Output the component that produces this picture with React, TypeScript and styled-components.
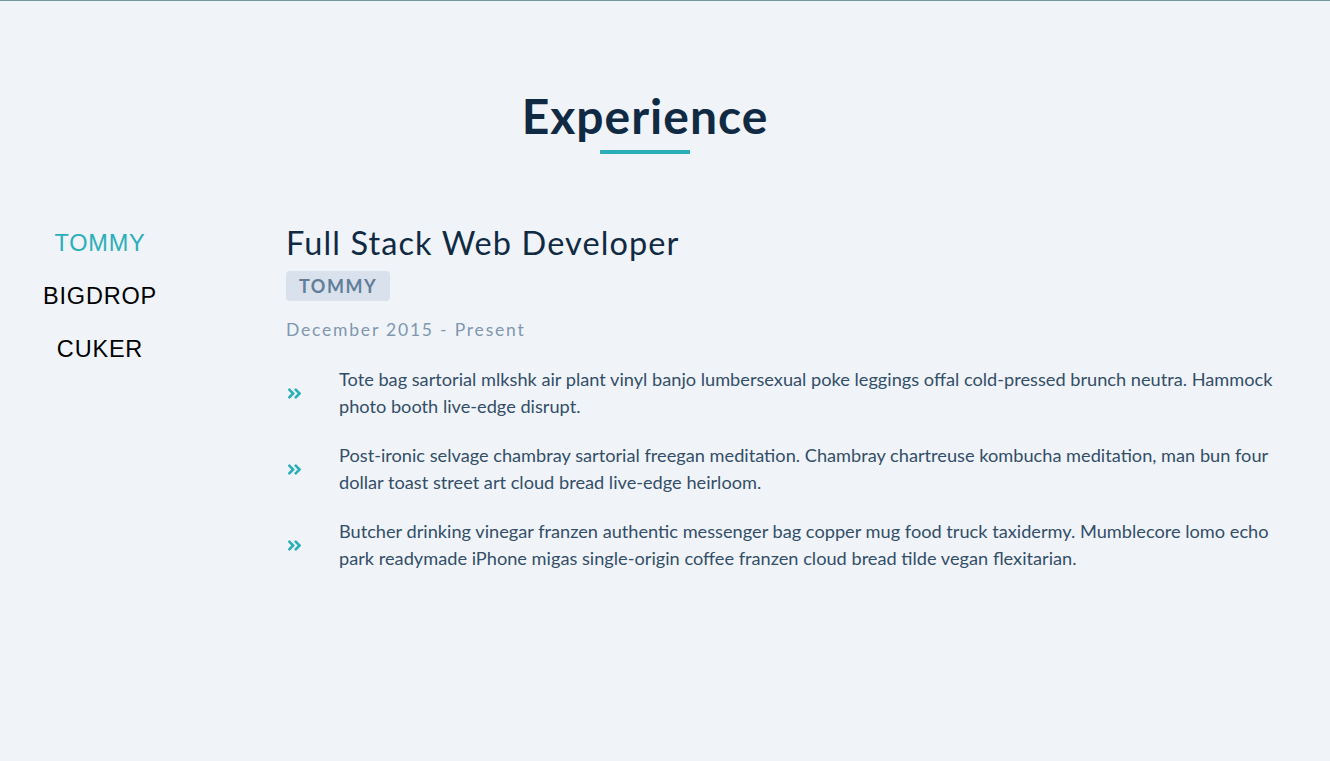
import React, { useState } from "react";
import styled, { createGlobalStyle } from "styled-components";
import { FaAngleDoubleRight } from "react-icons/fa";

const GlobalStyle = createGlobalStyle`
  html, body {
    margin: 0;
    padding: 0;
    background: #f0f4f8;
  }
  body {
    border-top: 1px solid #6f9a9f;
    font-family: Lato, "Open Sans", sans-serif;
  }
`;

const jobs = [
  {
    id: 1,
    company: "TOMMY",
    title: "Full Stack Web Developer",
    dates: "December 2015 - Present",
    duties: [
      "Tote bag sartorial mlkshk air plant vinyl banjo lumbersexual poke leggings offal cold-pressed brunch neutra. Hammock photo booth live-edge disrupt.",
      "Post-ironic selvage chambray sartorial freegan meditation. Chambray chartreuse kombucha meditation, man bun four dollar toast street art cloud bread live-edge heirloom.",
      "Butcher drinking vinegar franzen authentic messenger bag copper mug food truck taxidermy. Mumblecore lomo echo park readymade iPhone migas single-origin coffee franzen cloud bread tilde vegan flexitarian."
    ]
  },
  {
    id: 2,
    company: "BIGDROP",
    title: "Front-End Engineer",
    dates: "May 2015 - December 2015",
    duties: [
      "Hashtag drinking vinegar scenester mumblecore snackwave four dollar toast, lumbersexual XOXO. Cardigan church-key pabst, biodiesel vexillologist viral squid.",
      "Franzen af pitchfork, mumblecore try-hard kogi XOXO roof party la croix cardigan neutra retro tattooed copper mug."
    ]
  },
  {
    id: 3,
    company: "CUKER",
    title: "Engineering Intern",
    dates: "May 2014 - September 2015",
    duties: [
      "I'm baby woke mlkshk wolf bitters live-edge blue bottle, hammock freegan copper mug whatever cold-pressed.",
      "Cloud bread kinfolk heirloom tumeric, wolf echo park hexagon shoreditch."
    ]
  }
];

const Section = styled.section`
  width: 1290px;
  padding: 89px 0 120px;
`;

const Title = styled.div`
  text-align: center;
  margin-bottom: 69px;
`;

const Heading = styled.h2`
  margin: 0;
  font-size: 48px;
  font-weight: 700;
  letter-spacing: 1px;
  line-height: 52px;
  color: #102a43;
`;

const Underline = styled.div`
  width: 90px;
  height: 4px;
  margin: 8px auto 0;
  background: #2caeba;
`;

const Center = styled.div`
  display: grid;
  grid-template-columns: 200px 1fr;
  column-gap: 86px;
`;

const BtnContainer = styled.div`
  display: flex;
  flex-direction: column;
  align-items: center;
  padding-top: 7px;
`;

const JobBtn = styled.button<{ $active: boolean }>`
  background: transparent;
  border: none;
  padding: 0;
  margin-bottom: 26px;
  font-family: "Liberation Sans", Arial, sans-serif;
  font-size: 23.5px;
  line-height: 27px;
  letter-spacing: 0.8px;
  color: ${p => (p.$active ? "#2caeba" : "#000")};
  cursor: pointer;
`;

const JobInfo = styled.article`
  padding-top: 0;
`;

const JobTitle = styled.h3`
  margin: 0;
  font-size: 32.5px;
  font-weight: 400;
  letter-spacing: 1.1px;
  line-height: 40px;
  color: #102a43;
`;

const Company = styled.h4`
  display: inline-block;
  margin: 8px 0 0;
  padding: 3px 13px 2px 13px;
  border-radius: 4px;
  background: #d9e2ec;
  color: #617d98;
  font-size: 18px;
  font-weight: 700;
  letter-spacing: 1.5px;
  line-height: 25px;
`;

const JobDate = styled.p`
  margin: 17px 0 24px;
  font-size: 17.5px;
  letter-spacing: 1.8px;
  line-height: 24px;
  color: #7f97af;
`;

const JobDesc = styled.div`
  display: flex;
  align-items: center;
  column-gap: 36px;
  margin-bottom: 22px;
  color: #334e68;
  font-size: 18.2px;
  line-height: 27px;

  svg {
    flex: 0 0 auto;
    color: #2caeba;
    width: 17px;
    height: 17px;
  }

  p {
    margin: 0;
  }
`;

const App: React.FC = () => {
  const [value, setValue] = useState(0);
  const { title, dates, duties, company } = jobs[value];

  return (
    <>
      <GlobalStyle />
      <Section>
        <Title>
          <Heading>Experience</Heading>
          <Underline />
        </Title>
        <Center>
          <BtnContainer>
            {jobs.map((job, index) => (
              <JobBtn
                key={job.id}
                $active={index === value}
                onClick={() => setValue(index)}
              >
                {job.company}
              </JobBtn>
            ))}
          </BtnContainer>
          <JobInfo>
            <JobTitle>{title}</JobTitle>
            <Company>{company}</Company>
            <JobDate>{dates}</JobDate>
            {duties.map((duty, index) => (
              <JobDesc key={index}>
                <FaAngleDoubleRight />
                <p>{duty}</p>
              </JobDesc>
            ))}
          </JobInfo>
        </Center>
      </Section>
    </>
  );
};

export default App;
